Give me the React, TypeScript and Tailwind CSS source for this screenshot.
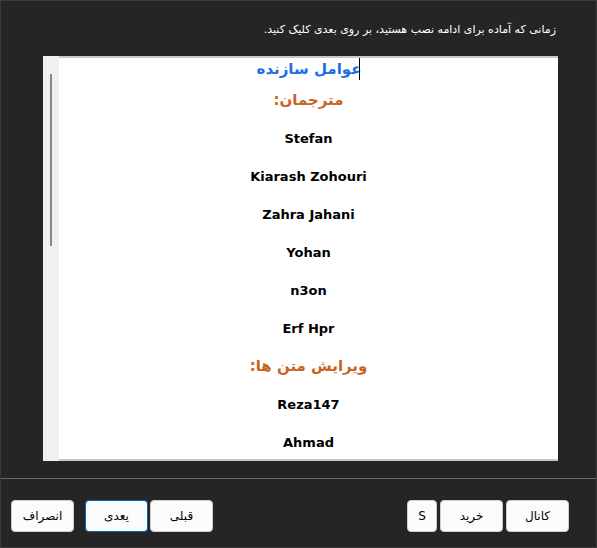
const rows: { t: string; c: string; fa?: boolean }[] = [
  { t: "مترجمان:", c: "text-[#c8641e] text-[15px]", fa: true },
  { t: "Stefan", c: "text-black text-[13px]" },
  { t: "Kiarash Zohouri", c: "text-black text-[13px]" },
  { t: "Zahra Jahani", c: "text-black text-[13px]" },
  { t: "Yohan", c: "text-black text-[13px]" },
  { t: "n3on", c: "text-black text-[13px]" },
  { t: "Erf Hpr", c: "text-black text-[13px]" },
  { t: "ویرایش متن ها:", c: "text-[#c8641e] text-[15px]", fa: true },
  { t: "Reza147", c: "text-black text-[13px]" },
  { t: "Ahmad", c: "text-black text-[13px]" },
];

const Btn = ({ label, w, active }: { label: string; w: string; active?: boolean }) => (
  <button
    className={`${w} h-[32px] rounded-[4px] bg-[#fbfbfb] text-[12px] text-black border ${
      active ? "border-[#0067c0]" : "border-[#d0d0d0]"
    }`}
  >
    {label}
  </button>
);

export default function App() {
  return (
    <div
      className="w-[597px] h-[548px] bg-[#252525] border border-[#3a3a3a] flex flex-col"
      style={{ fontFamily: "Tahoma, 'DejaVu Sans', 'Noto Sans', sans-serif" }}
    >
      <div dir="rtl" className="pt-[21px] pr-[40px] text-[11px] text-white h-[55px]">
        زمانی که آماده برای ادامه نصب هستید، بر روی بعدی کلیک کنید.
      </div>
      <div className="ml-[42px] w-[515px] h-[405px] flex">
        <div className="w-[16px] bg-[#f0f0f0] pt-[18px] flex justify-center">
          <div className="w-[2px] h-[172px] bg-[#888]" />
        </div>
        <div className="flex-1 bg-white border-t-2 border-b-2 border-[#c8c8c8] overflow-hidden flex flex-col items-center font-bold">
          <div className="h-[28px] flex items-center">
            <span dir="rtl" className="text-[#1a6ee8] text-[15px]">عوامل سازنده</span>
            <span className="w-px h-[22px] bg-black ml-[-2px]" />
          </div>
          {rows.map((r, i) => (
            <div
              key={i}
              dir={r.fa ? "rtl" : "ltr"}
              className={`h-[38px] shrink-0 flex items-center ${r.c} ${i === 0 ? "mt-[1px]" : ""}`}
            >
              {r.t}
            </div>
          ))}
        </div>
      </div>
      <div className="mt-[17px] h-px bg-[#6a6a6a]" />
      <div className="flex items-center px-[10px] mt-[21px]">
        <Btn label="انصراف" w="w-[63px]" />
        <div className="ml-[11px]"><Btn label="یعدی" w="w-[63px]" active /></div>
        <div className="ml-[2px]"><Btn label="قبلی" w="w-[63px]" /></div>
        <div className="flex-1" />
        <Btn label="S" w="w-[30px]" />
        <div className="ml-[3px]"><Btn label="خرید" w="w-[63px]" /></div>
        <div className="ml-[3px]"><Btn label="کانال" w="w-[63px]" /></div>
        <div className="w-[17px]" />
      </div>
    </div>
  );
}
